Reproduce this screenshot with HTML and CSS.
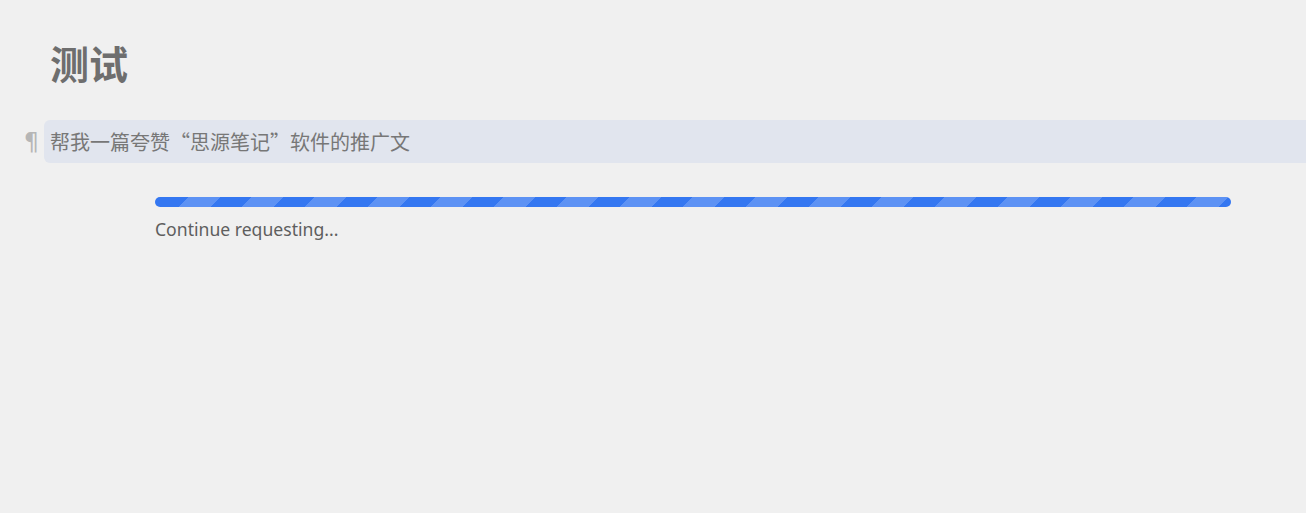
FILE: index.html
```html
<!DOCTYPE html>
<html lang="zh">
<head>
<meta charset="utf-8">
<link rel="stylesheet" href="styles.css">
</head>
<body>
<div class="editor">
  <h1 class="title">测试</h1>
  <div class="block-row">
    <span class="gutter">¶</span>
    <div class="block">帮我一篇夸赞“思源笔记”软件的推广文</div>
  </div>
  <div class="progress-area">
    <div class="progress"><div class="progress-bar"></div></div>
    <div class="progress-text">Continue requesting...</div>
  </div>
</div>
</body>
</html>
```
FILE: styles.css
```css
html, body {
  margin: 0;
  padding: 0;
  background: #f0f0f0;
  height: 100%;
  overflow: hidden;
}
body {
  font-family: "Noto Sans", "Noto Sans CJK SC", sans-serif;
}
.editor {
  padding-top: 34px;
}
.title {
  margin: 0 0 0 50px;
  font-family: "Noto Sans CJK SC", sans-serif;
  font-size: 39px;
  font-weight: 700;
  line-height: 56px;
  color: #6e6e6e;
}
.block-row {
  display: flex;
  align-items: center;
  margin-top: 30px;
}
.gutter {
  width: 44px;
  box-sizing: border-box;
  text-align: right;
  padding-right: 5px;
  color: #b6b6b6;
  font-family: "DejaVu Sans", sans-serif;
  font-size: 24px;
  line-height: 24px;
}
.block {
  flex: 1;
  height: 43px;
  display: flex;
  align-items: center;
  padding-left: 6px;
  background: #e1e5ee;
  border-radius: 6px 0 0 6px;
  font-family: "Noto Sans CJK SC", sans-serif;
  font-size: 20px;
  color: #777777;
}
.progress-area {
  margin: 34px 75px 0 155px;
}
.progress {
  height: 10px;
  border-radius: 5px;
  overflow: hidden;
  background: #3477f1;
}
.progress-bar {
  height: 100%;
  background-color: #3477f1;
  background-image: linear-gradient(-45deg,
    rgba(255,255,255,0.2) 25%, transparent 25%,
    transparent 50%, rgba(255,255,255,0.2) 50%,
    rgba(255,255,255,0.2) 75%, transparent 75%, transparent);
  background-size: 63px 63px;
  background-position: 2px 0;
}
.progress-text {
  margin-top: 10px;
  font-size: 17.6px;
  color: #5e5e5e;
  line-height: 24px;
}
```
